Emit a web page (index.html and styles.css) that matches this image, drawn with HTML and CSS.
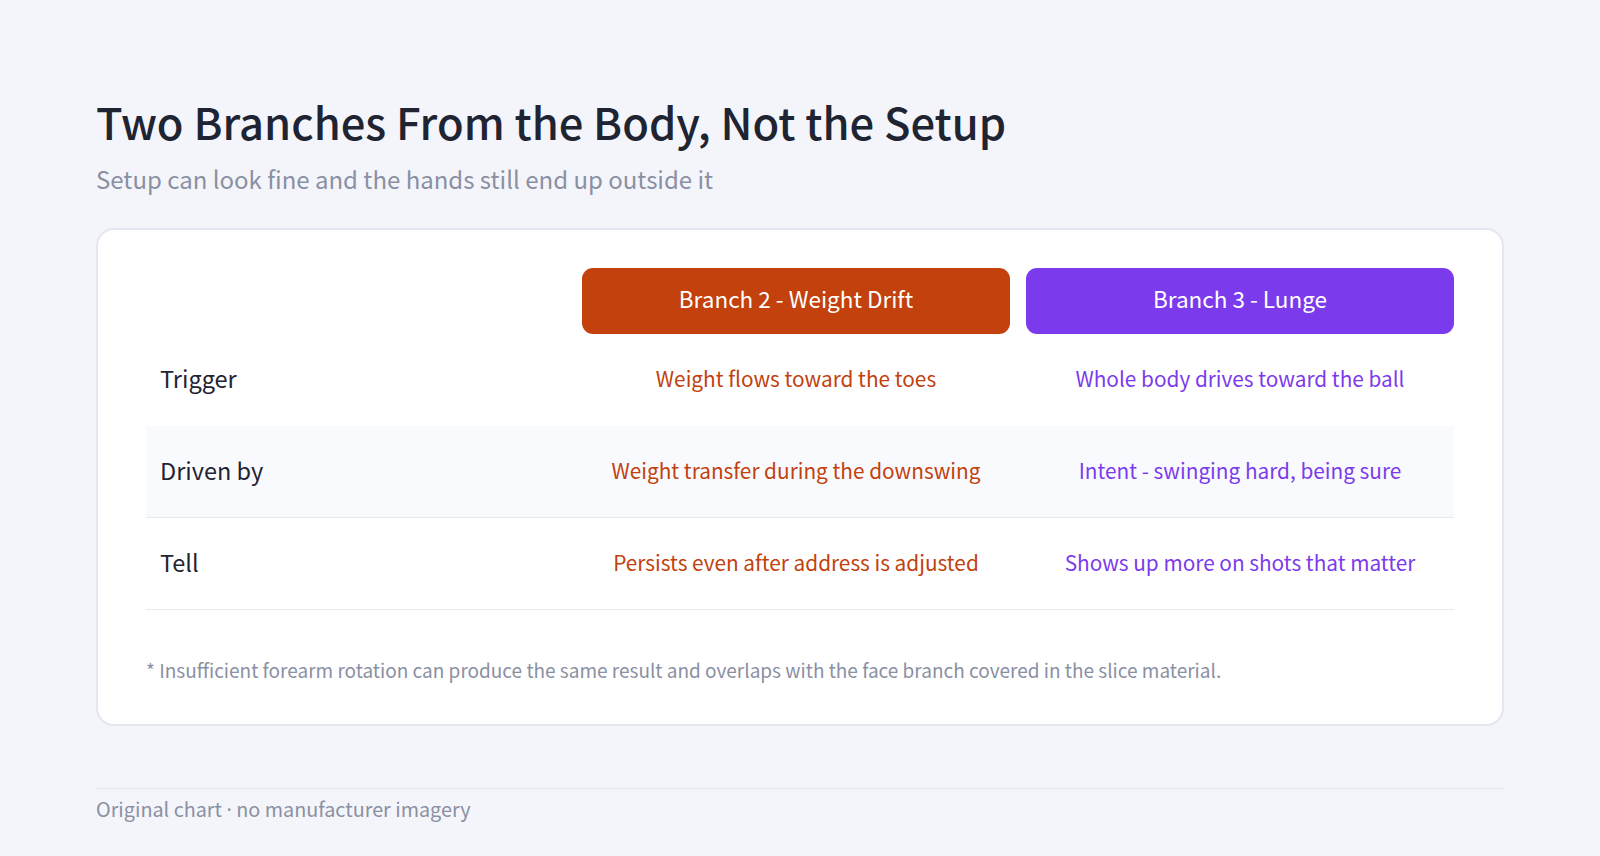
FILE: index.html
```
<!DOCTYPE html>
<html lang="en">
<head>
<meta charset="utf-8">
<title>Two Branches From the Body, Not the Setup</title>
<link rel="stylesheet" href="styles.css">
</head>
<body>
<main class="page">
  <header class="head">
    <h1 class="title">Two Branches From the Body, Not the Setup</h1>
    <p class="subtitle">Setup can look fine and the hands still end up outside it</p>
  </header>

  <section class="card">
    <div class="table">
      <div class="row row-head">
        <div class="cell label"></div>
        <div class="cell th th-orange">Branch 2 - Weight Drift</div>
        <div class="cell th th-purple">Branch 3 - Lunge</div>
      </div>
      <div class="row">
        <div class="cell label">Trigger</div>
        <div class="cell td orange">Weight flows toward the toes</div>
        <div class="cell td purple">Whole body drives toward the ball</div>
      </div>
      <div class="row row-alt row-line">
        <div class="cell label">Driven by</div>
        <div class="cell td orange">Weight transfer during the downswing</div>
        <div class="cell td purple">Intent - swinging hard, being sure</div>
      </div>
      <div class="row row-line">
        <div class="cell label">Tell</div>
        <div class="cell td orange">Persists even after address is adjusted</div>
        <div class="cell td purple">Shows up more on shots that matter</div>
      </div>
    </div>
    <p class="note">* Insufficient forearm rotation can produce the same result and overlaps with the face branch covered in the slice material.</p>
  </section>

  <footer class="foot">Original chart <span class="dot">·</span> no manufacturer imagery</footer>
</main>
</body>
</html>
```
FILE: styles.css
```
* { box-sizing: border-box; }

html, body {
  margin: 0;
  padding: 0;
}

body {
  background: #f4f5fa;
  font-family: "Noto Sans CJK KR", "Noto Sans", sans-serif;
  color: #1f2433;
}

.page {
  padding: 96px 96px 0;
}

.head {
  display: flex;
  flex-direction: column;
}

.title {
  margin: 0;
  font-size: 43.5px;
  line-height: 52px;
  font-weight: 500;
  color: #1f2433;
}

.subtitle {
  margin: 15px 0 0;
  font-size: 24px;
  line-height: 32px;
  color: #8a90a3;
}

.card {
  margin-top: 33px;
  background: #ffffff;
  border: 2px solid #e4e6f0;
  border-radius: 18px;
  padding: 38px 48px 40px;
}

.table {
  display: flex;
  flex-direction: column;
}

.row {
  display: grid;
  grid-template-columns: 1fr 428px 428px;
  column-gap: 16px;
  align-items: center;
  height: 92px;
}

.row-head {
  height: 66px;
}

.row-alt {
  background: #f9fafe;
}

.row-line {
  border-bottom: 1px solid #e6e8ef;
}

.cell {
  display: flex;
  align-items: center;
  height: 100%;
  padding-bottom: 4px;
}

.label {
  padding-left: 14px;
  font-size: 23.5px;
  color: #1f2433;
}

.th {
  justify-content: center;
  border-radius: 11px;
  color: #ffffff;
  font-size: 22.5px;
  padding-bottom: 6px;
}

.th-orange { background: #c2410c; }
.th-purple { background: #7c3aed; }

.td {
  justify-content: center;
  font-size: 20.8px;
}

.orange { color: #c2410c; }
.purple { color: #7c3aed; }

.note {
  margin: 46px 0 0;
  font-size: 19px;
  line-height: 28px;
  color: #8a90a3;
}

.foot {
  margin-top: 62px;
  border-top: 1px solid #e2e4ec;
  padding-top: 6px;
  font-size: 19.8px;
  line-height: 28px;
  color: #8a90a3;
}

.dot {
  font-family: "Noto Sans", sans-serif;
}
```
